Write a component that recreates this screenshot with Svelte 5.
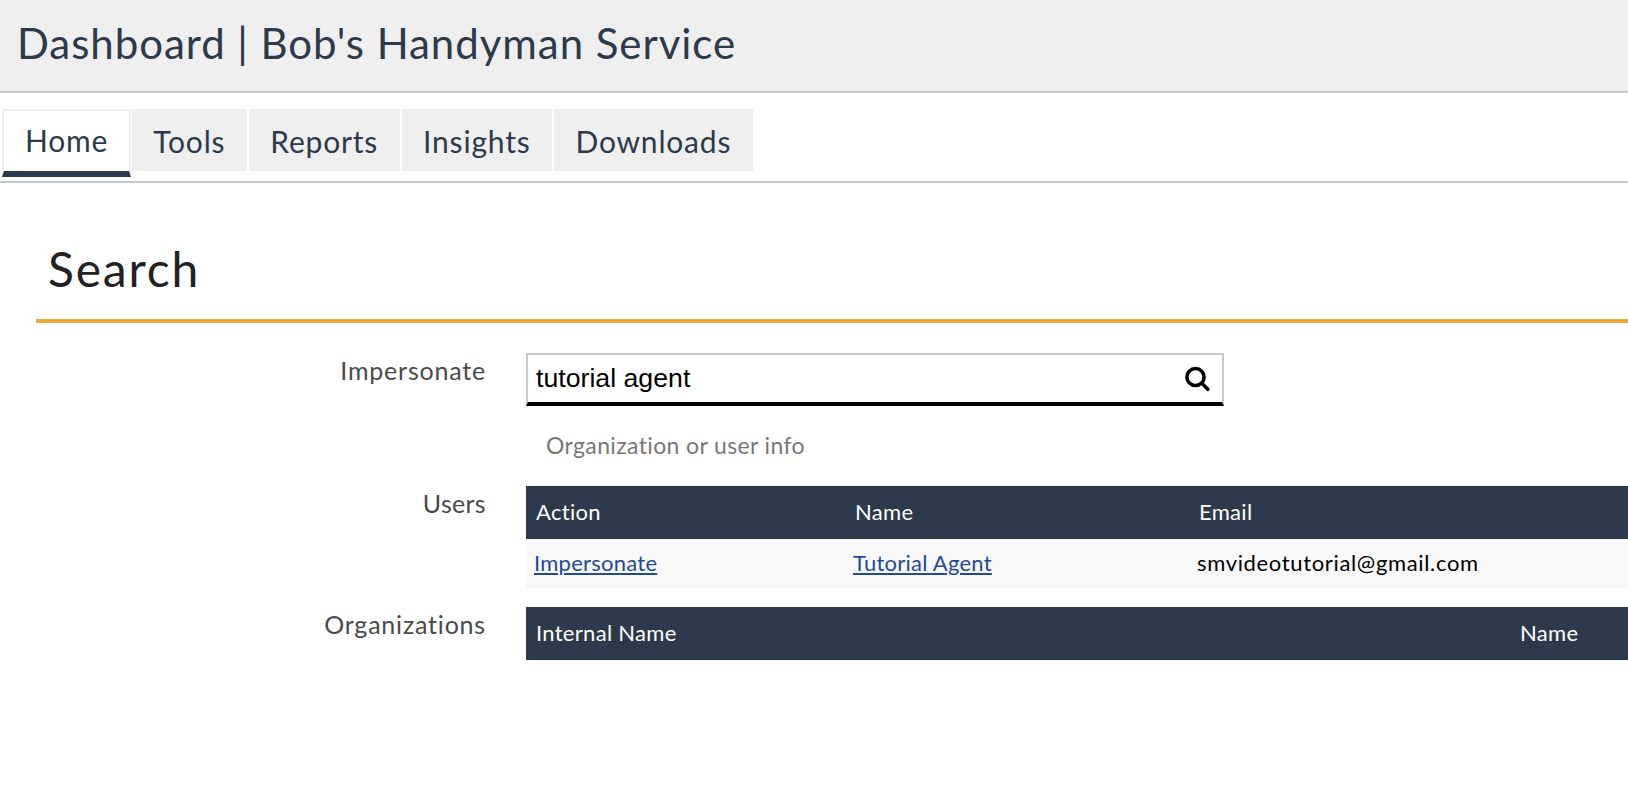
<script lang="ts">
  const tabs = ['Home', 'Tools', 'Reports', 'Insights', 'Downloads'];
  let active = $state('Home');
  let query = $state('tutorial agent');
</script>

<header class="topbar">
  <h1>Dashboard | Bob's Handyman Service</h1>
</header>

<nav class="tabs">
  {#each tabs as tab}
    <button class="tab" class:active={active === tab} onclick={() => (active = tab)}>{tab}</button>
  {/each}
</nav>

<main class="content">
  <h2>Search</h2>

  <div class="form">
    <div class="label impersonate">Impersonate</div>
    <div class="field">
      <div class="search-box">
        <input bind:value={query} aria-label="Impersonate" />
        <svg width="26" height="26" viewBox="0 0 26 26" fill="none" stroke="#000" stroke-width="3.5" aria-hidden="true">
          <circle cx="11.5" cy="11" r="8.6" />
          <path d="M17.8 17.3l6 6" stroke-linecap="round" />
        </svg>
      </div>
      <p class="hint">Organization or user info</p>
    </div>

    <div class="label users">Users</div>
    <table class="users-table">
      <thead>
        <tr>
          <th class="col-action">Action</th>
          <th class="col-name">Name</th>
          <th>Email</th>
        </tr>
      </thead>
      <tbody>
        <tr>
          <td><a href="#impersonate">Impersonate</a></td>
          <td><a href="#agent">Tutorial Agent</a></td>
          <td class="email">smvideotutorial@gmail.com</td>
        </tr>
      </tbody>
    </table>

    <div class="label orgs">Organizations</div>
    <table class="orgs-table">
      <thead>
        <tr>
          <th class="col-internal">Internal Name</th>
          <th>Name</th>
        </tr>
      </thead>
    </table>
  </div>
</main>

<style>
  :global(body) {
    margin: 0;
    background: #fff;
    font-family: Lato, "Noto Sans", sans-serif;
    overflow: hidden;
  }

  .topbar {
    height: 85px;
    background: #efefef;
    border-bottom: 2px solid #c8c8c8;
    padding: 0 0 6px 17px;
    display: flex;
    align-items: center;
  }

  h1 {
    margin: 0;
    font-size: 42px;
    font-weight: 400;
    letter-spacing: 0.95px;
    color: #2c3a4b;
  }

  .tabs {
    height: 72px;
    padding: 16px 0 0 2px;
    display: flex;
    align-items: flex-start;
    gap: 2px;
    border-bottom: 2px solid #c8c8c8;
  }

  .tab {
    height: 62px;
    padding: 1px 22px 0 21px;
    border: 0;
    background: #efefef;
    font: inherit;
    font-size: 30px;
    letter-spacing: 0.8px;
    color: #2c3a4b;
  }

  .tab.active {
    height: 68px;
    padding: 0 21px 2px 21px;
    background: #fff;
    border: 2px solid #efefef;
    border-bottom: 6px solid #2c3a4b;
    box-sizing: border-box;
    margin-right: -1px;
  }

  .content {
    padding: 51px 0 0 36px;
  }

  h2 {
    margin: 0;
    padding: 0 0 16px 12px;
    font-size: 48px;
    line-height: 69px;
    font-weight: 400;
    letter-spacing: 1.8px;
    color: #222;
    border-bottom: 4px solid #f0a73a;
  }

  .form {
    display: grid;
    grid-template-columns: 450px 1fr;
    column-gap: 40px;
    padding-top: 30px;
  }

  .label {
    text-align: right;
    font-size: 25px;
    line-height: 30px;
    letter-spacing: 0.8px;
    color: #4a4a4a;
  }

  .impersonate { padding-top: 2px; }
  .users { padding-top: 2px; letter-spacing: 0.3px; }
  .orgs { padding-top: 2px; }

  .field {
    min-width: 0;
  }

  .search-box {
    width: 698px;
    height: 53px;
    box-sizing: border-box;
    border: 2px solid #c8c8c8;
    border-bottom: 4px solid #000;
    display: flex;
    align-items: center;
    padding: 0 12px 0 8px;
  }

  .search-box input {
    flex: 1;
    min-width: 0;
    border: 0;
    outline: 0;
    padding: 0;
    font-family: "Liberation Sans", Arial, sans-serif;
    font-size: 26.7px;
    color: #000;
  }

  .hint {
    margin: 0;
    padding: 25px 0 27px 20px;
    font-size: 23px;
    line-height: 28px;
    letter-spacing: 0.37px;
    color: #777;
  }

  table {
    width: 100%;
    border-collapse: collapse;
    table-layout: fixed;
  }

  .users-table {
    margin-bottom: 19px;
  }

  th {
    height: 51px;
    padding: 0 10px 2px;
    background: #2c3a4b;
    color: #fff;
    font-size: 22px;
    font-weight: 400;
    letter-spacing: 0.3px;
    text-align: left;
  }

  td {
    height: 47px;
    padding: 0 8px 2px;
    background: #f8f8f8;
    font-size: 22px;
    letter-spacing: 0.25px;
    color: #000;
  }

  td.email {
    letter-spacing: 0.65px;
  }

  td a {
    color: #1f4a96;
  }

  .col-action { width: 319px; box-sizing: border-box; }
  .col-name { width: 344px; box-sizing: border-box; }
  .col-internal { width: 984px; box-sizing: border-box; }
</style>
